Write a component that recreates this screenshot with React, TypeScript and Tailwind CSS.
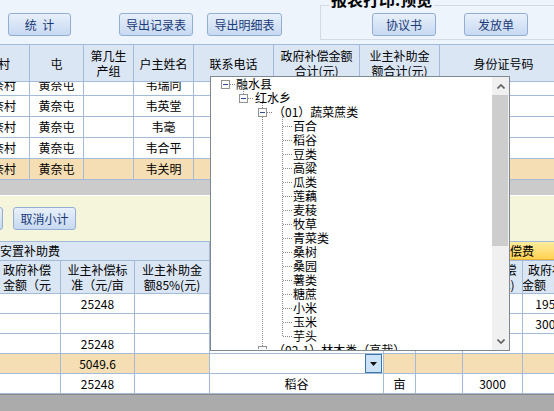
import type { ReactNode } from 'react'

const LINE = 'border-[#a3bbd9]'

type Col = { w: string; head: string[]; cls?: string }

const topCols: Col[] = [
  { w: 'w-[63px]', head: ['村'], cls: 'items-end pr-[19px]' },
  { w: 'w-[54px]', head: ['屯'] },
  { w: 'w-[50px]', head: ['第几生', '产组'] },
  { w: 'w-[60px]', head: ['户主姓名'] },
  { w: 'w-[80px]', head: ['联系电话'] },
  { w: 'w-[86px]', head: ['政府补偿金额', '合计(元)'] },
  { w: 'w-[80px]', head: ['业主补助金', '额合计(元)'] },
  { w: 'w-[128px]', head: ['身份证号码'] },
  { w: 'w-[80px]', head: ['备注'] },
]

const topRows = [
  { name: '韦瑞同', hl: false },
  { name: '韦英堂', hl: false },
  { name: '韦毫', hl: false },
  { name: '韦合平', hl: false },
  { name: '韦关明', hl: true },
]

const botCols: Col[] = [
  { w: 'w-[67px]', head: ['政府补偿', '金额（元'] },
  { w: 'w-[74px]', head: ['业主补偿标', '准（元/亩'] },
  { w: 'w-[75px]', head: ['业主补助金', '额85%(元)'] },
  { w: 'w-[174px]', head: ['品种'] },
  { w: 'w-[32px]', head: ['单位'] },
  { w: 'w-[47px]', head: ['数量'] },
  { w: 'w-[60px]', head: ['亩产补偿', '标准(元)'] },
  { w: 'w-[59px]', head: ['政府补偿', '金额（元）'] },
  { w: 'w-[60px]', head: ['备注'] },
]

const botRows: { cells: string[]; hl?: boolean }[] = [
  { cells: ['', '25248', '', '', '', '', '', '19500', ''] },
  { cells: ['', '', '', '', '', '', '', '30000', ''] },
  { cells: ['', '25248', '', '', '', '', '', '', ''] },
  { cells: ['', '5049.6', '', '', '', '', '', '', ''], hl: true },
  { cells: ['', '25248', '', '稻谷', '亩', '', '3000', '', ''] },
]

const tree: { level: number; text: string }[] = [
  { level: 0, text: '融水县' },
  { level: 1, text: '红水乡' },
  { level: 2, text: '（01）蔬菜蔗类' },
  ...['百合', '稻谷', '豆类', '高粱', '瓜类', '莲藕', '麦稜', '牧草', '青菜类', '桑树', '桑园', '薯类', '糖蔗', '小米', '玉米', '芋头'].map(text => ({ level: 3, text })),
  { level: 2, text: '（02-1）林木类（高栽）' },
]

const indent = ['pl-[25px]', 'pl-[44px]', 'pl-[62px]', 'pl-[82px]']

function Btn({ children, className }: { children: ReactNode; className?: string }) {
  return (
    <div
      className={`flex h-[23px] shrink-0 items-center justify-center rounded-[3px] border border-[#93aed4] bg-gradient-to-b from-[#e8f0fb] to-[#c7d9f1] text-[12px] text-[#1b3a78] ${className ?? ''}`}
    >
      {children}
    </div>
  )
}

function HeadCell({ col }: { col: Col }) {
  return (
    <div
      className={`flex shrink-0 flex-col justify-center overflow-hidden border-r ${LINE} text-center leading-[15px] whitespace-nowrap ${col.w} ${col.cls ?? 'items-center'}`}
    >
      {col.head.map(h => (
        <span key={h}>{h}</span>
      ))}
    </div>
  )
}

function TreeLines() {
  const boxes = [
    { x: 10, y: 3 },
    { x: 28, y: 17 },
    { x: 47, y: 31 },
    { x: 47, y: 269 },
  ]
  const leaves = tree.map((t, i) => (t.level === 3 ? i : -1)).filter(i => i >= 0)
  return (
    <svg className="pointer-events-none absolute left-0 top-0" width={281} height={272} shapeRendering="crispEdges">
      <g stroke="#8a8a8a" strokeDasharray="1 1">
        <line x1={32.5} y1={10} x2={32.5} y2={17} />
        <line x1={51.5} y1={24} x2={51.5} y2={272} />
        <line x1={71.5} y1={38} x2={71.5} y2={259} />
        <line x1={19} y1={7.5} x2={24} y2={7.5} />
        <line x1={37} y1={21.5} x2={43} y2={21.5} />
        <line x1={56} y1={35.5} x2={61} y2={35.5} />
        {leaves.map(i => (
          <line key={i} x1={72} y1={14 * i + 7.5} x2={81} y2={14 * i + 7.5} />
        ))}
      </g>
      {boxes.map(b => (
        <g key={`${b.x}-${b.y}`}>
          <rect x={b.x + 0.5} y={b.y + 0.5} width={8} height={8} fill="#fbfbfb" stroke="#929292" />
          <line x1={b.x + 2} x2={b.x + 7} y1={b.y + 4.5} y2={b.y + 4.5} stroke="#2e4d9b" />
        </g>
      ))}
    </svg>
  )
}

function Popup() {
  return (
    <div className="absolute left-[210px] top-[76px] flex h-[275px] w-[300px] border border-[#7f8790] bg-white">
      <div className="relative h-full w-[281px] overflow-hidden">
        <TreeLines />
        <div className="relative flex flex-col">
          {tree.map((t, i) => (
            <div key={i} className={`h-[14px] leading-[14px] whitespace-nowrap ${indent[t.level]}`}>
              {t.text}
            </div>
          ))}
        </div>
      </div>
      <div className="flex w-[17px] flex-col bg-[#f0f0f0]">
        <div className="flex h-[18px] items-center justify-center">
          <svg width="8" height="5" viewBox="0 0 8 5">
            <polyline points="0.5,4.5 4,1 7.5,4.5" fill="none" stroke="#606060" strokeWidth="1.6" />
          </svg>
        </div>
        <div className="mr-[1px] h-[151px] bg-[#cdcdcd]" />
        <div className="flex-1" />
        <div className="flex h-[18px] items-center justify-center">
          <svg width="8" height="5" viewBox="0 0 8 5">
            <polyline points="0.5,0.5 4,4 7.5,0.5" fill="none" stroke="#606060" strokeWidth="1.6" />
          </svg>
        </div>
      </div>
    </div>
  )
}

export default function App() {
  return (
    <div className="relative flex h-[411px] w-[554px] flex-col overflow-hidden bg-white font-['Noto_Sans_CJK_SC',sans-serif] text-[12px] text-black">
      {/* toolbar */}
      <div className="flex h-[44px] shrink-0 items-start bg-[#eef4fc]">
        <Btn className="ml-[8px] mt-[13px] w-[63px]">统{'\u00a0\u00a0'}计</Btn>
        <Btn className="ml-[48px] mt-[13px] w-[74px]">导出记录表</Btn>
        <Btn className="ml-[14px] mt-[13px] w-[75px]">导出明细表</Btn>
        <div className="relative ml-[38px] mt-[5px] flex h-[35px] w-[260px] shrink-0 items-start border border-[#d2dae3]">
          <span className="absolute left-[8px] top-[-15px] bg-[#eef4fc] px-[2px] text-[16px] leading-[16px] font-bold whitespace-nowrap">
            报表打印.预览
          </span>
          <Btn className="ml-[51px] mt-[7px] w-[64px]">协议书</Btn>
          <Btn className="ml-[28px] mt-[7px] w-[64px]">发放单</Btn>
        </div>
      </div>

      {/* upper grid */}
      <div className="ml-[-33px] flex shrink-0 flex-col">
        <div className={`flex h-[38px] border-y ${LINE} bg-[#dbe6f4]`}>
          {topCols.map(c => (
            <HeadCell key={c.head.join('')} col={c} />
          ))}
        </div>
        {topRows.map((r, ri) => (
          <div
            key={r.name}
            className={`overflow-hidden border-b ${LINE} ${ri === 0 ? 'h-[14px]' : 'h-[21px]'} ${r.hl ? 'bg-[#f5deb3]' : 'bg-white'}`}
          >
            <div className={`flex ${ri === 0 ? 'mt-[-7px] h-[20px]' : 'h-[20px]'}`}>
              {topCols.map((c, ci) => (
                <div
                  key={ci}
                  className={`flex shrink-0 items-center justify-center border-r ${LINE} whitespace-nowrap ${c.w}`}
                >
                  {ci === 0 ? '黄奈村' : ci === 1 ? '黄奈屯' : ci === 3 ? r.name : ''}
                </div>
              ))}
            </div>
          </div>
        ))}
      </div>

      {/* summary band */}
      <div className="h-[15px] shrink-0 bg-[#cbcbcb]" />
      <div className="h-[1px] shrink-0 bg-white" />
      <div className="flex h-[45px] shrink-0 items-center bg-[#f5f5dc]">
        <Btn className="ml-[-60px] w-[63px]">小计</Btn>
        <Btn className="ml-[10px] w-[63px]">取消小计</Btn>
      </div>

      {/* lower grid */}
      <div className="ml-[-6px] flex shrink-0 flex-col">
        <div className={`flex h-[20px] border-y ${LINE}`}>
          <div className={`flex w-[216px] shrink-0 items-center border-r ${LINE} bg-[#dbe6f4] pl-[6px]`}>安置补助费</div>
          <div className={`flex w-[174px] shrink-0 items-center justify-center border-r ${LINE} bg-[#dbe6f4]`}>青苗</div>
          <div className="flex w-[300px] shrink-0 items-center border-b border-[#e2b23a] bg-gradient-to-b from-[#ffec9c] to-[#ffd24f] pl-[18px] whitespace-nowrap">
            青苗及地上附着物补偿费
          </div>
        </div>
        <div className={`flex h-[33px] border-b ${LINE} bg-[#dbe6f4]`}>
          {botCols.map(c => (
            <HeadCell key={c.head.join('')} col={c} />
          ))}
        </div>
        {botRows.map((r, ri) => (
          <div key={ri} className={`flex h-[20px] border-b ${LINE} ${r.hl ? 'bg-[#f5deb3]' : 'bg-white'}`}>
            {botCols.map((c, ci) =>
              r.hl && ci === 3 ? (
                <div key={ci} className={`flex shrink-0 justify-end border-r ${LINE} bg-white ${c.w}`}>
                  <div className="mr-[1px] flex w-[17px] items-center justify-center border border-[#3b77a8] bg-[#cbe2f8]">
                    <svg width="7" height="4" viewBox="0 0 7 4">
                      <polygon points="0,0 7,0 3.5,4" fill="#111" />
                    </svg>
                  </div>
                </div>
              ) : (
                <div
                  key={ci}
                  className={`flex shrink-0 items-center justify-center border-r ${LINE} whitespace-nowrap ${c.w}`}
                >
                  {r.cells[ci]}
                </div>
              ),
            )}
          </div>
        ))}
      </div>
      <div className="flex-1 border-t border-[#8a8a8a] bg-[#ababab]" />

      <Popup />
    </div>
  )
}
